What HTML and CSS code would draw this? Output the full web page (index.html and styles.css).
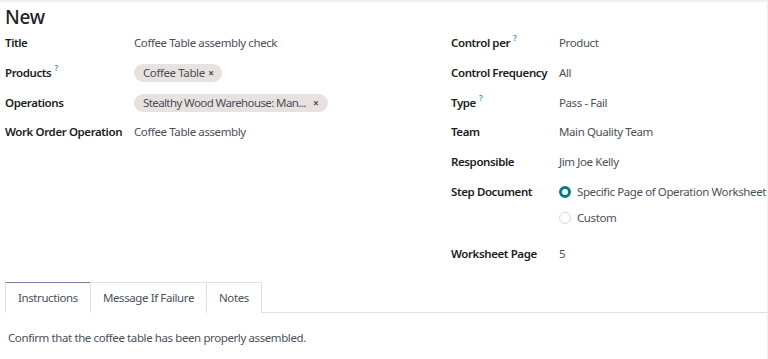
FILE: index.html
```html
<!DOCTYPE html>
<html lang="en">
<head>
    <meta charset="UTF-8">
    <title>New</title>
    <link rel="stylesheet" href="styles.css">
</head>
<body>
    <div class="sheet">
        <h1 class="title">New</h1>
        <div class="groups">
            <div class="group left">
                <div class="row">
                    <div class="label">Title</div>
                    <div class="value">Coffee Table assembly check</div>
                </div>
                <div class="row">
                    <div class="label">Products<sup>?</sup></div>
                    <div class="value"><span class="tag">Coffee Table <b>×</b></span></div>
                </div>
                <div class="row">
                    <div class="label">Operations</div>
                    <div class="value"><span class="tag wide">Stealthy Wood Warehouse: Man... <b>×</b></span></div>
                </div>
                <div class="row">
                    <div class="label">Work Order Operation</div>
                    <div class="value">Coffee Table assembly</div>
                </div>
            </div>
            <div class="group right">
                <div class="row">
                    <div class="label">Control per<sup>?</sup></div>
                    <div class="value">Product</div>
                </div>
                <div class="row">
                    <div class="label">Control Frequency</div>
                    <div class="value">All</div>
                </div>
                <div class="row">
                    <div class="label">Type<sup>?</sup></div>
                    <div class="value">Pass - Fail</div>
                </div>
                <div class="row">
                    <div class="label">Team</div>
                    <div class="value">Main Quality Team</div>
                </div>
                <div class="row">
                    <div class="label">Responsible</div>
                    <div class="value">Jim Joe Kelly</div>
                </div>
                <div class="row radios">
                    <div class="label">Step Document</div>
                    <div class="value">
                        <label class="radio"><span class="dot checked"></span>Specific Page of Operation Worksheet</label>
                        <label class="radio"><span class="dot"></span>Custom</label>
                    </div>
                </div>
                <div class="row page">
                    <div class="label">Worksheet Page</div>
                    <div class="value">5</div>
                </div>
            </div>
        </div>
        <div class="tabs">
            <div class="tab active">Instructions</div>
            <div class="tab">Message If Failure</div>
            <div class="tab">Notes</div>
        </div>
        <div class="tab-body">Confirm that the coffee table has been properly assembled.</div>
    </div>
</body>
</html>
```

FILE: styles.css
```css
body {
    margin: 0;
    font-family: "Noto Sans", sans-serif;
    font-size: 11.5px;
    letter-spacing: -0.4px;
    color: #4a5058;
    background: #fff;
    overflow: hidden;
}

.sheet {
    border-top: 2px solid #eef0f2;
    border-right: 1px solid #eef0f2;
    height: 357px;
}

.title {
    margin: 0;
    padding: 2px 5px 0;
    font-size: 19px;
    font-weight: 500;
    letter-spacing: -0.2px;
    line-height: 26px;
    color: #1f2328;
}

.groups {
    display: flex;
    padding: 4px 0 0 5px;
}

.group.left {
    width: 446px;
    flex-shrink: 0;
}

.group.right {
    flex: 1;
    min-width: 0;
}

.row {
    display: flex;
    min-height: 29.8px;
    align-items: flex-start;
}

.label {
    width: 129px;
    flex-shrink: 0;
    font-weight: 600;
    color: #1a1d21;
    line-height: 18px;
    white-space: nowrap;
}

.right .label {
    width: 108px;
}

.value {
    line-height: 18px;
    white-space: nowrap;
}

sup {
    font-size: 8px;
    color: #2f8fc9;
    margin-left: 3px;
    vertical-align: 6px;
    line-height: 0;
}

.tag {
    display: inline-block;
    background: #e7e1df;
    border-radius: 9px;
    padding: 0 8px 0 9px;
    line-height: 18px;
}

.tag b {
    font-size: 10px;
    margin-left: 1px;
}

.tag.wide {
    letter-spacing: -0.6px;
    padding-right: 10px;
}

.tag.wide b {
    margin-left: 5px;
}

.radio {
    display: flex;
    align-items: center;
    line-height: 18px;
    height: 18px;
}

.radio:first-child {
    margin-bottom: 8px;
}

.dot {
    box-sizing: border-box;
    width: 12px;
    height: 12px;
    border: 1px solid #d8dadd;
    border-radius: 50%;
    margin-right: 6px;
}

.dot.checked {
    border: 3.5px solid #017e84;
}

.row.radios {
    min-height: 62px;
}

.tabs {
    display: flex;
    margin: 7px 0 0 5px;
    border-bottom: 1px solid #dee2e6;
}

.tab {
    padding: 0 12px;
    line-height: 29px;
    border: 1px solid #dee2e6;
    border-bottom: none;
    margin-left: -1px;
    margin-bottom: -1px;
    background: #fff;
    color: #4a5058;
}

.tab:first-child {
    margin-left: 0;
}

.tab.active {
    border-top-color: #71849b;
    line-height: 30px;
}

.tab-body {
    padding: 17px 8px;
}
```
